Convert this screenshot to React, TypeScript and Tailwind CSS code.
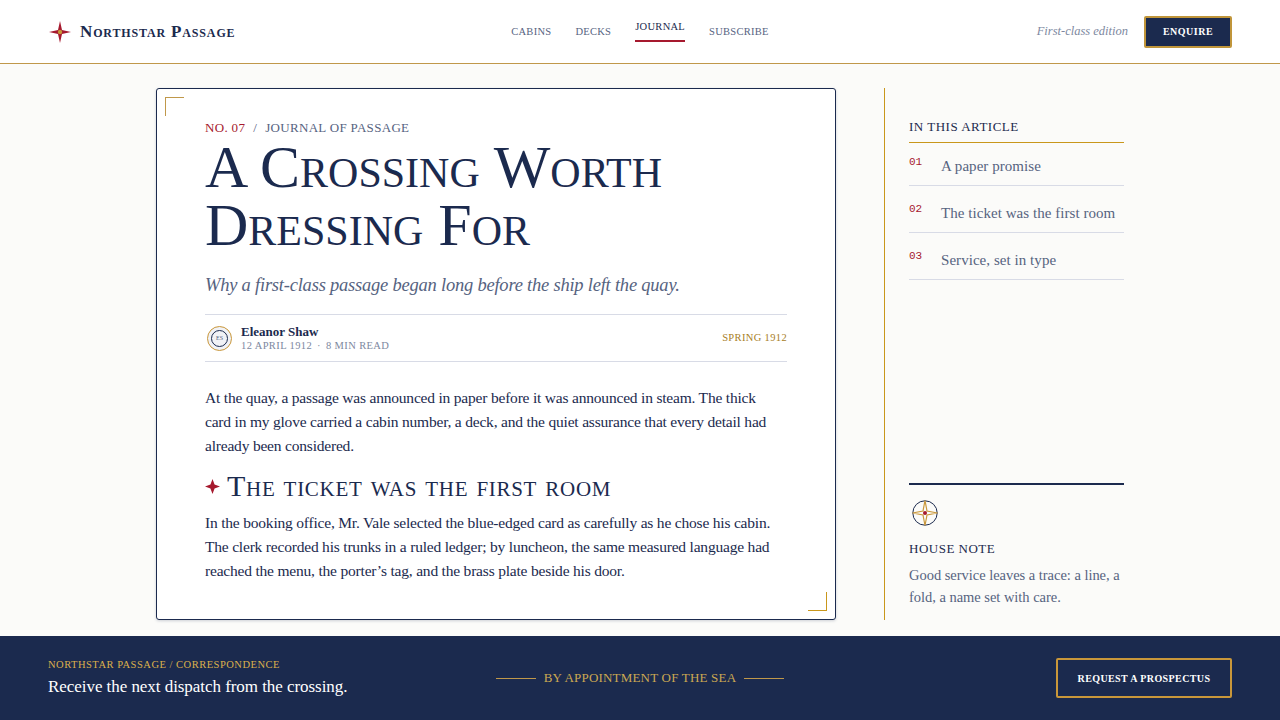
const serif = "font-['Liberation_Serif',serif]";

const navItems = [
  { label: "Cabins" },
  { label: "Decks" },
  { label: "Journal", active: true },
  { label: "Subscribe" },
];

const contents = [
  { no: "01", title: "A paper promise" },
  { no: "02", title: "The ticket was the first room" },
  { no: "03", title: "Service, set in type" },
];

function StarMark() {
  return (
    <svg viewBox="0 0 24 24" className="h-6 w-6 shrink-0" aria-hidden="true">
      <path d="M12 1 L14 10 L23 12 L14 14 L12 23 L10 14 L1 12 L10 10 Z" fill="#a6192e" />
      <circle cx="12" cy="12" r="2.2" fill="#c9973a" />
    </svg>
  );
}

function Compass() {
  return (
    <svg viewBox="0 0 28 28" className="h-7 w-7" aria-hidden="true">
      <circle cx="14" cy="14" r="12.2" fill="none" stroke="#1b2a4e" strokeWidth="1" />
      <path
        d="M14 1.5 L16 12 L26.5 14 L16 16 L14 26.5 L12 16 L1.5 14 L12 12 Z"
        fill="none"
        stroke="#c9973a"
        strokeWidth="1.2"
      />
      <circle cx="14" cy="14" r="2" fill="#a6192e" />
    </svg>
  );
}

function Header() {
  return (
    <header className="flex h-16 items-center justify-between border-b border-[#c0984a] bg-white px-12">
      <div className="flex w-[300px] items-center gap-2">
        <StarMark />
        <span className="text-[17px] font-bold tracking-[0.85px] text-[#1b2a4e] [font-variant:small-caps]">
          Northstar Passage
        </span>
      </div>
      <nav className="flex items-center gap-6">
        {navItems.map((item) =>
          item.active ? (
            <a key={item.label} className="-mt-[3px] border-b-2 border-[#a6192e] pb-[5px] text-[10.5px] uppercase leading-[16px] tracking-[0.28px] text-[#1b2a4e]">
              {item.label}
            </a>
          ) : (
            <a key={item.label} className="text-[10.5px] uppercase leading-[16px] tracking-[0.28px] text-[#56637f]">
              {item.label}
            </a>
          ),
        )}
      </nav>
      <div className="flex w-[300px] items-center justify-end gap-4">
        <span className="text-[12.5px] italic text-[#7d88a0]">First-class edition</span>
        <button
          type="button"
          className="flex h-8 w-[88px] items-center justify-center rounded-[2px] border-2 border-[#c0953a] bg-[#1b2a4e] text-[10px] font-bold uppercase tracking-[0.5px] text-white"
        >
          Enquire
        </button>
      </div>
    </header>
  );
}

function Article() {
  return (
    <article className="relative h-[532px] w-[680px] shrink-0 rounded-[3px] border border-[#1b2a4e] bg-white px-12 pt-[30px] shadow-[0_1px_3px_rgba(27,42,78,0.2)]">
      <span className="absolute left-2 top-2 h-[19px] w-[19px] border-l border-t border-[#c0984a]" />
      <span className="absolute bottom-2 right-2 h-[19px] w-[19px] border-b border-r border-[#c9971c]" />

      <p className="text-[13px] uppercase leading-[18px] tracking-[0.32px] text-[#56637f]">
        <span className="text-[#a6192e]">No. 07</span>
        <span className="mx-2">/</span>
        Journal of Passage
      </p>
      <h1 className="mt-[1px] text-[60px] font-normal leading-[58px] text-[#1b2a4e] [font-variant:small-caps]">
        A Crossing Worth
        <br />
        Dressing For
      </h1>
      <p className="mt-[16px] text-[18.5px] italic leading-[30px] tracking-[-0.22px] text-[#56637f]">
        Why a first-class passage began long before the ship left the quay.
      </p>

      <div className="mt-[14px] flex h-12 items-center justify-between border-y border-[#d8dbe6]">
        <div className="flex items-center gap-[9px] pl-[2px]">
          <div className="flex h-[25px] w-[25px] items-center justify-center rounded-full border border-[#c9973a] bg-[#f1f2f6]">
            <div className="flex h-[17px] w-[17px] items-center justify-center rounded-full border border-[#1b2a4e] text-[6px] text-[#56637f]">
              ES
            </div>
          </div>
          <div>
            <p className="text-[13px] font-bold leading-[15px] text-[#1b2a4e]">Eleanor Shaw</p>
            <p className="text-[10.5px] uppercase leading-[14px] tracking-[0.38px] text-[#7d88a0]">
              12 April 1912
              <span className="mx-[5px]">·</span>
              8 min read
            </p>
          </div>
        </div>
        <span className="text-[10.5px] uppercase tracking-[0.35px] text-[#a8801f]">Spring 1912</span>
      </div>

      <p className="mt-6 text-[15.5px] leading-6 tracking-[-0.2px] text-[#1b2a4e]">
        At the quay, a passage was announced in paper before it was announced in steam. The thick
        <br />
        card in my glove carried a cabin number, a deck, and the quiet assurance that every detail had
        <br />
        already been considered.
      </p>
      <h2 className="mt-[10px] flex items-center gap-[7px] text-[30px] font-normal leading-[36px] tracking-[0.7px] text-[#1b2a4e] [font-variant:small-caps]">
        <svg viewBox="0 0 16 16" className="h-[15px] w-[15px] shrink-0" aria-hidden="true">
          <path d="M8 0 L10.2 5.8 L16 8 L10.2 10.2 L8 16 L5.8 10.2 L0 8 L5.8 5.8 Z" fill="#a6192e" />
        </svg>
        The ticket was the first room
      </h2>
      <p className="mt-[7px] text-[15.5px] leading-6 tracking-[-0.2px] text-[#1b2a4e]">
        In the booking office, Mr. Vale selected the blue-edged card as carefully as he chose his cabin.
        <br />
        The clerk recorded his trunks in a ruled ledger; by luncheon, the same measured language had
        <br />
        reached the menu, the porter’s tag, and the brass plate beside his door.
      </p>
    </article>
  );
}

function Sidebar() {
  return (
    <aside className="flex h-[532px] w-[240px] shrink-0 flex-col justify-between border-l border-[#c9971c] pl-6">
      <div className="pt-[30px]">
        <h3 className="border-b border-[#c9971c] pb-[6px] text-[13px] font-normal uppercase leading-[18px] tracking-[0.5px] text-[#1b2a4e]">
          In this article
        </h3>
        <ul>
          {contents.map((item) => (
            <li key={item.no} className="mt-1 flex border-b border-[#d8dbe6] pb-[7px] pt-[11px] first:mt-0">
              <span className="w-8 shrink-0 font-['Liberation_Mono',monospace] text-[11px] leading-[16px] text-[#a6192e]">
                {item.no}
              </span>
              <span className="text-[15px] leading-6 tracking-[0.05px] text-[#56637f]">{item.title}</span>
            </li>
          ))}
        </ul>
      </div>
      <div className="border-t-2 border-[#1b2a4e] pt-[14px]">
        <div className="ml-[2px]">
          <Compass />
        </div>
        <h3 className="mt-[13px] text-[13px] font-normal uppercase leading-[18px] tracking-[0.5px] text-[#1b2a4e]">
          House note
        </h3>
        <p className="mt-[6px] pb-[12px] text-[14.5px] leading-[22px] tracking-[-0.03px] text-[#56637f]">
          Good service leaves a trace: a line, a
          <br />
          fold, a name set with care.
        </p>
      </div>
    </aside>
  );
}

function Footer() {
  return (
    <footer className="flex h-[84px] items-center justify-between bg-[#1b2a4e] px-12">
      <div className="w-[400px]">
        <p className="text-[10.5px] uppercase leading-[16px] tracking-[0.5px] text-[#dcb04c]">
          Northstar Passage / Correspondence
        </p>
        <p className="mt-[2px] text-[17px] leading-6 tracking-[-0.05px] text-white">Receive the next dispatch from the crossing.</p>
      </div>
      <div className="flex items-center gap-2">
        <span className="h-px w-10 bg-[#c0984a]" />
        <span className="text-[13px] uppercase tracking-[0.2px] text-[#cba852]">By appointment of the sea</span>
        <span className="h-px w-10 bg-[#c0984a]" />
      </div>
      <div className="flex w-[400px] justify-end">
        <button
          type="button"
          className="flex h-10 w-44 items-center justify-center rounded-[2px] border-2 border-[#c9973a] text-[10px] font-bold uppercase tracking-[0.4px] text-white"
        >
          Request a prospectus
        </button>
      </div>
    </footer>
  );
}

export default function App() {
  return (
    <div className={`${serif} flex h-[720px] w-full flex-col overflow-hidden bg-[#fbfbf9]`}>
      <Header />
      <main className="flex flex-1 justify-center gap-12 pt-6">
        <Article />
        <Sidebar />
      </main>
      <Footer />
    </div>
  );
}
